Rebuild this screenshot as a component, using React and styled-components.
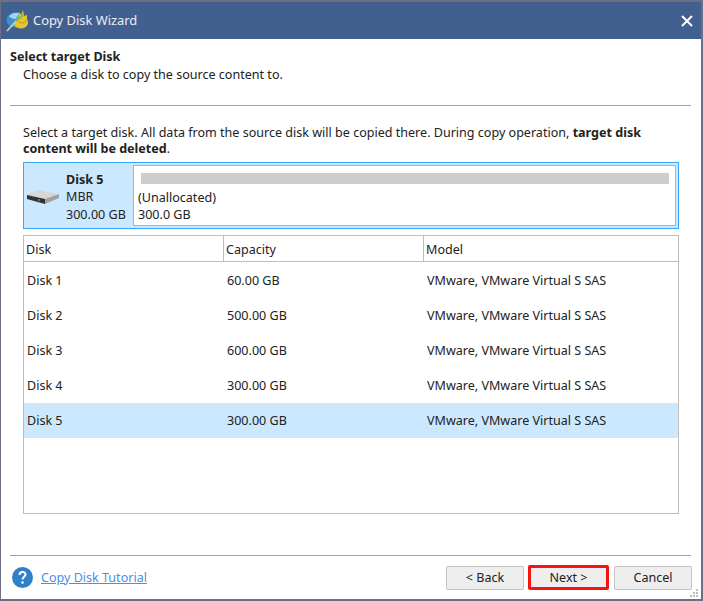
import React from "react";
import styled, { createGlobalStyle } from "styled-components";

const GlobalStyle = createGlobalStyle`
  html, body {
    margin: 0;
    padding: 0;
    background: #6e6e84;
  }
  body {
    font-family: "Noto Sans", "Open Sans", sans-serif;
    font-size: 12.55px;
    color: #222;
  }
`;

const Desktop = styled.div`
  width: 703px;
  height: 601px;
  overflow: hidden;
  padding: 2px 2px 2px 1px;
  box-sizing: border-box;
`;

const Win = styled.div`
  position: relative;
  height: 597px;
  background: #fff;
  display: flex;
  flex-direction: column;
`;

const TitleBar = styled.div`
  height: 37px;
  background: #42608f;
  color: #e9eef5;
  display: flex;
  align-items: center;
  padding: 0 8px 0 5px;
  font-size: 12.9px;
  flex: none;
`;

const TitleText = styled.span`
  margin-left: 4px;
  margin-top: -2px;
  flex: 1;
`;

const CloseBtn = styled.svg`
  width: 12px;
  height: 12px;
`;

const Heading = styled.div`
  padding: 9px 9px 0;
  height: 57px;
  flex: none;
`;

const HeadingTitle = styled.div`
  font-weight: 700;
  line-height: 18px;
`;

const HeadingSub = styled.div`
  padding-left: 13px;
  line-height: 18px;
`;

const Rule = styled.div`
  height: 1px;
  background: #a0a0a0;
  margin: 0 10px 0 9px;
  flex: none;
`;

const Content = styled.div`
  flex: 1;
  padding: 19px 22px 0;
  display: flex;
  flex-direction: column;
`;

const Intro = styled.p`
  margin: 0 0 5px;
  line-height: 16px;
  white-space: nowrap;
  b {
    font-weight: 700;
  }
`;

const DiskCard = styled.div`
  height: 67px;
  box-sizing: border-box;
  border: 1px solid #33a6ff;
  background: #cce8ff;
  display: flex;
  padding: 2px;
  flex: none;
`;

const DiskInfo = styled.div`
  width: 107px;
  flex: none;
  display: flex;
  align-items: center;
  padding-left: 1px;
  box-sizing: border-box;
`;

const DiskLabels = styled.div`
  margin-left: 7px;
  padding-top: 3px;
  line-height: 17.5px;
  white-space: nowrap;
  b {
    font-weight: 700;
  }
`;

const DriveSvg = styled.svg`
  width: 32px;
  height: 14px;
  flex: none;
  margin-top: 3px;
`;

const PartBox = styled.div`
  flex: 1;
  background: #fff;
  border: 1px solid #a9b4c4;
  padding: 7px 6px 0 4px;
  line-height: 17px;
`;

const UsageBar = styled.div`
  height: 11px;
  background: #cdcdcd;
  margin: 0 0 5px 3px;
`;

const Table = styled.div`
  margin-top: 6px;
  height: 279px;
  box-sizing: border-box;
  border: 1px solid #bdbdbd;
  flex: none;
`;

const Cols = styled.div`
  display: grid;
  grid-template-columns: 200px 200px 1fr;
  align-items: center;
`;

const HeadRow = styled(Cols)`
  height: 26px;
  border-bottom: 1px solid #bdbdbd;
  box-sizing: border-box;
  margin-bottom: 1px;
`;

const HeadCell = styled.div`
  padding: 1px 0 0 2px;
  height: 100%;
  line-height: 25px;
  box-sizing: border-box;
  border-right: 1px solid #bdbdbd;
  &:last-child {
    border-right: 0;
  }
`;

const Row = styled(Cols)`
  height: 35px;
  background: ${(p) => (p.$selected ? "#cce8ff" : "transparent")};
`;

const Cell = styled.div`
  padding-left: 3px;
`;

const FooterBar = styled.div`
  height: 43px;
  flex: none;
  display: flex;
  align-items: center;
  padding: 0 9px 0 11px;
`;

const HelpIcon = styled.svg`
  width: 21px;
  height: 21px;
  flex: none;
`;

const TutorialLink = styled.a`
  margin-left: 8px;
  color: #4a90e8;
  text-decoration: underline;
  flex: 1;
`;

const Button = styled.button`
  width: ${(p) => (p.$highlight ? "81px" : "78px")};
  height: ${(p) => (p.$highlight ? "25px" : "24px")};
  margin-left: ${(p) => (p.$highlight ? "4px" : "0")};
  margin-right: ${(p) => (p.$highlight ? "5px" : "0")};
  padding: 0;
  box-sizing: border-box;
  background: #eeeeee;
  color: #222;
  font: inherit;
  border-radius: 2px;
  border: ${(p) => (p.$highlight ? "3px solid #f5140f" : "1px solid #c4c4c4")};
`;

const Grip = styled.svg`
  position: absolute;
  right: 3px;
  bottom: 2px;
  width: 8px;
  height: 8px;
`;

const WizardIcon = () => (
  <svg width="23" height="23" viewBox="0 0 23 23">
    <ellipse cx="9" cy="11" rx="8.500" ry="7.500" fill="#3a90d6" />
    <path d="M3 7c3-3 7-4 10-3l-3 6c-3 0-6-1-7-3z" fill="#a5d4ee" />
    <path d="M8 16l4-7 1-6 2 3 2-5 1 6 3-1v4c2 3 1 7-3 9-4 1-8 0-10-3z" fill="#e7c52f" />
    <path d="M13 13c3 2 6 1 8-2" fill="none" stroke="#b8941c" strokeWidth="1" />
    <path d="M1 22L12 10" stroke="#d8d2b8" strokeWidth="1.600" />
    <path d="M10 12l7-6" stroke="#6fbf4a" strokeWidth="2" />
  </svg>
);

const DriveIcon = () => (
  <DriveSvg viewBox="0 0 32 14">
    <path d="M0 5L10 0l22 4-14 5z" fill="#d6d6d6" />
    <path d="M0 5l18 4v5L0 9z" fill="#333" />
    <path d="M18 9l14-5v4l-14 6z" fill="#a0a0a0" />
    <circle cx="12" cy="10" r="1" fill="#35c04a" />
  </DriveSvg>
);

const rows = ["Disk 1", "Disk 2", "Disk 3", "Disk 4", "Disk 5"];
const sizes = ["60.00 GB", "500.00 GB", "600.00 GB", "300.00 GB", "300.00 GB"];
const gripDots = [
  [6, 0],
  [3, 3],
  [6, 3],
  [0, 6],
  [3, 6],
  [6, 6],
];

export default function App() {
  return (
    <Desktop>
      <GlobalStyle />
      <Win>
        <TitleBar>
          <WizardIcon />
          <TitleText>Copy Disk Wizard</TitleText>
          <CloseBtn viewBox="0 0 12 12">
            <path d="M1 1l10 10M11 1L1 11" stroke="#fff" strokeWidth="2" />
          </CloseBtn>
        </TitleBar>
        <Heading>
          <HeadingTitle>Select target Disk</HeadingTitle>
          <HeadingSub>Choose a disk to copy the source content to.</HeadingSub>
        </Heading>
        <Rule />
        <Content>
          <Intro>
            Select a target disk. All data from the source disk will be copied there. During copy operation, <b>target disk</b>
            <br />
            <b>content will be deleted</b>.
          </Intro>
          <DiskCard>
            <DiskInfo>
              <DriveIcon />
              <DiskLabels>
                <b>Disk 5</b>
                <br />
                MBR
                <br />
                300.00 GB
              </DiskLabels>
            </DiskInfo>
            <PartBox>
              <UsageBar />
              (Unallocated)
              <br />
              300.0 GB
            </PartBox>
          </DiskCard>
          <Table>
            <HeadRow>
              <HeadCell>Disk</HeadCell>
              <HeadCell>Capacity</HeadCell>
              <HeadCell>Model</HeadCell>
            </HeadRow>
            {rows.map((name, i) => (
              <Row key={name} $selected={i === 4}>
                <Cell>{name}</Cell>
                <Cell>{sizes[i]}</Cell>
                <Cell>VMware, VMware Virtual S SAS</Cell>
              </Row>
            ))}
          </Table>
        </Content>
        <Rule />
        <FooterBar>
          <HelpIcon viewBox="0 0 21 21">
            <circle cx="10.500" cy="10.500" r="10.500" fill="#2f80c8" />
            <path d="M7.500 8c0-4 6-4 6-.5 0 2-3 2.500-3 5" fill="none" stroke="#fff" strokeWidth="2" />
            <circle cx="10.500" cy="15.500" r="1.300" fill="#fff" />
          </HelpIcon>
          <TutorialLink>Copy Disk Tutorial</TutorialLink>
          <Button>&lt; Back</Button>
          <Button $highlight>Next &gt;</Button>
          <Button>Cancel</Button>
        </FooterBar>
        <Grip viewBox="0 0 8 8">
          {gripDots.map(([x, y]) => (
            <rect key={`${x}-${y}`} x={x} y={y} width="2" height="2" fill="#bdbdbd" />
          ))}
        </Grip>
      </Win>
    </Desktop>
  );
}
